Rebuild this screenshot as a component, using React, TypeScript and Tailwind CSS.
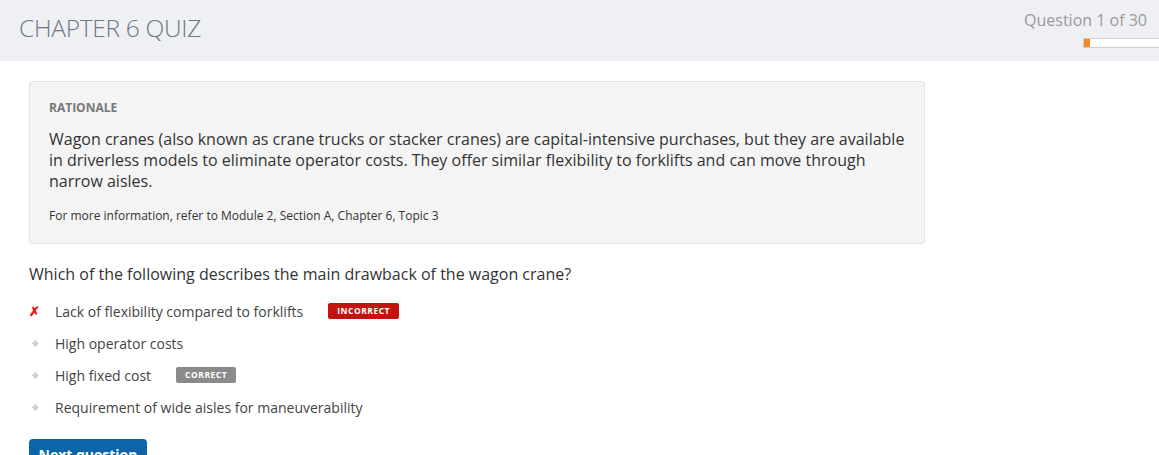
import React from "react";

const font = { fontFamily: '"Open Sans", "Noto Sans", sans-serif' };

function Bullet() {
  return (
    <span className="flex w-[26px] shrink-0 items-center">
      <span className="ml-[4px] block h-[5px] w-[5px] rotate-45 bg-[#d0d0d0]" />
    </span>
  );
}

function Badge({ label, color }: { label: string; color: string }) {
  return (
    <span
      className={`ml-[25px] inline-flex h-[16px] items-center rounded-[2px] px-[9px] text-[8.5px] font-bold tracking-[0.5px] text-white ${color}`}
    >
      {label}
    </span>
  );
}

export default function App() {
  const options = [
    { text: "Lack of flexibility compared to forklifts", wrong: true },
    { text: "High operator costs" },
    { text: "High fixed cost", correct: true },
    { text: "Requirement of wide aisles for maneuverability" },
  ];
  return (
    <div className="min-h-[455px] w-[1159px] overflow-hidden bg-white text-[#333]" style={font}>
      <header className="flex h-[61px] items-start justify-between bg-[#eff0f4]">
        <h1 className="ml-[19px] mt-[11px] text-[24.5px] font-light leading-[34px] tracking-[-0.3px] text-[#6e7784]">
          CHAPTER 6 QUIZ
        </h1>
        <div className="flex flex-col items-end">
          <div className="mr-[12px] mt-[8px] text-[16px] leading-[24px] text-[#9a9a9a]">
            Question 1 of 30
          </div>
          <div className="mt-[6px] ml-auto flex h-[10px] w-[76px] border border-r-0 border-[#cfcfcf] bg-white">
            <div className="h-full w-[6px] bg-[#f7891c]" />
          </div>
        </div>
      </header>

      <main className="pl-[29px] pt-[20px]">
        <section className="w-[896px] rounded-[3px] border border-[#e3e3e3] bg-[#f4f4f4] px-[19px] pb-[18px] pt-[17px]">
          <div className="text-[12px] font-bold leading-[18px] text-[#777]">RATIONALE</div>
          <p className="mt-[12px] text-[16px] leading-[21px] text-[#333]">
            Wagon cranes (also known as crane trucks or stacker cranes) are capital-intensive purchases, but they are available
            in driverless models to eliminate operator costs. They offer similar flexibility to forklifts and can move through
            narrow aisles.
          </p>
          <p className="mt-[14px] text-[12px] leading-[19px] text-[#333]">
            For more information, refer to Module 2, Section A, Chapter 6, Topic 3
          </p>
        </section>

        <h2 className="mt-[18px] text-[16px] leading-[24px] text-[#333]">
          Which of the following describes the main drawback of the wagon crane?
        </h2>

        <ul className="mt-[9px] flex flex-col">
          {options.map((o) => (
            <li key={o.text} className="flex h-[32px] items-center text-[14px] text-[#444]">
              {o.wrong ? (
                <span className="w-[26px] shrink-0 text-[13px] font-bold leading-none text-[#ee1111]">✗</span>
              ) : (
                <Bullet />
              )}
              <span>{o.text}</span>
              {o.wrong && <Badge label="INCORRECT" color="bg-[#c4120c]" />}
              {o.correct && <Badge label="CORRECT" color="bg-[#8a8a8a]" />}
            </li>
          ))}
        </ul>

        <button className="mt-[16px] h-[36px] w-[118px] rounded-[4px] bg-[#0b65a8] pb-[4px] text-[14px] font-bold leading-[30px] text-white">
          Next question
        </button>
      </main>
    </div>
  );
}
